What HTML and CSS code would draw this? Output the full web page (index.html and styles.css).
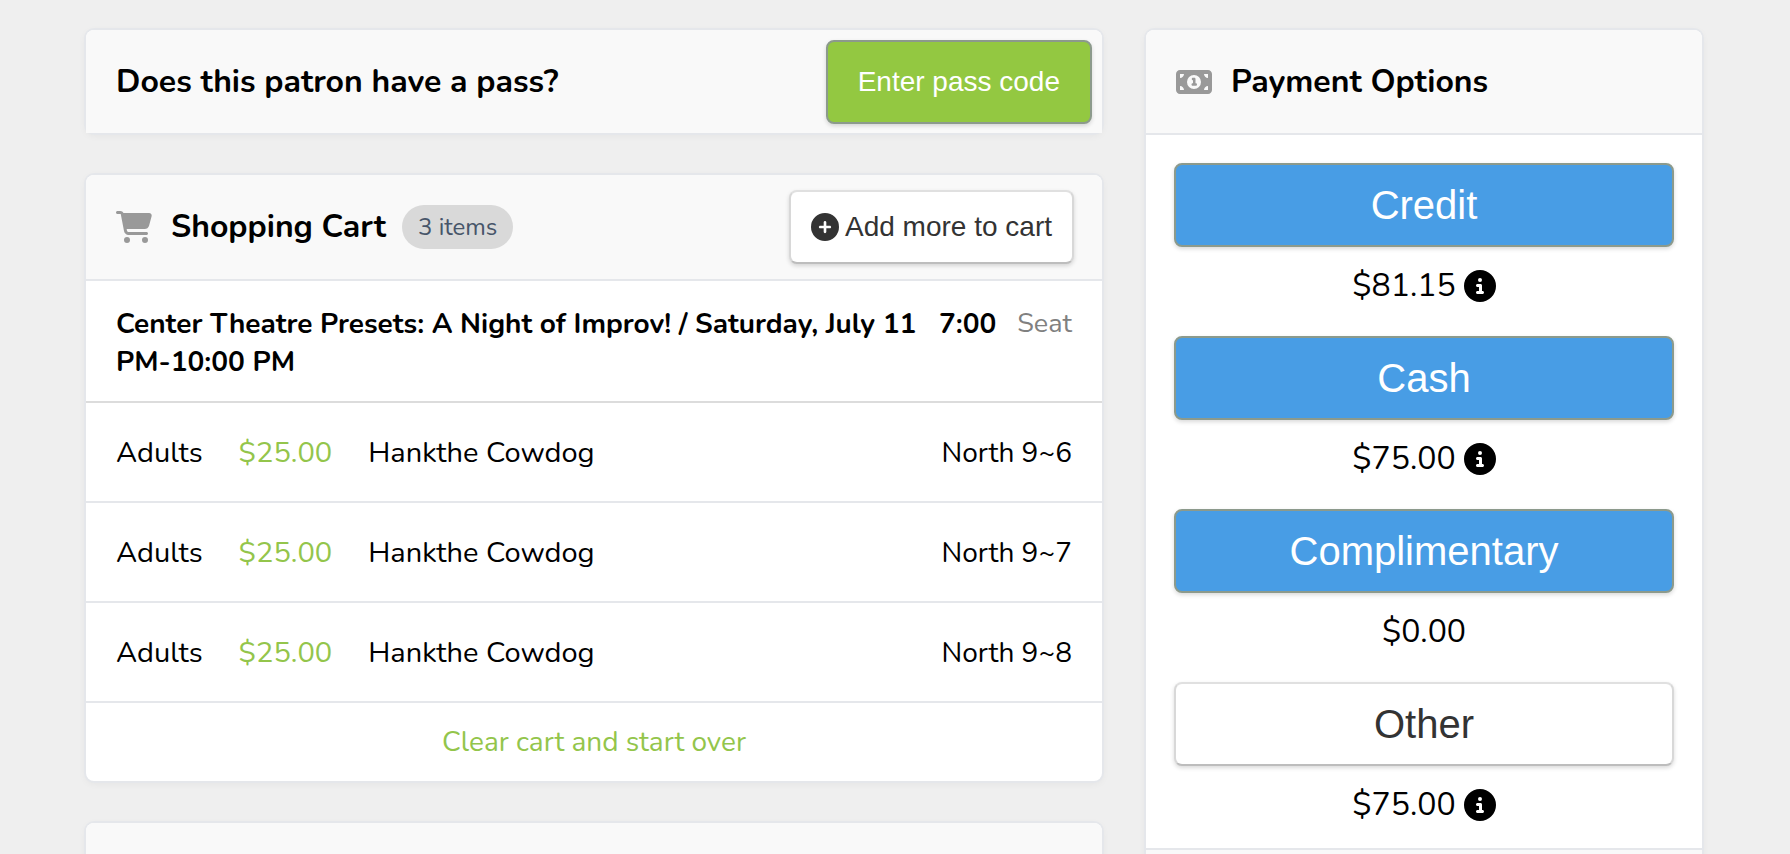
FILE: index.html
```html
<!DOCTYPE html>
<html lang="en">
<head>
  <meta charset="UTF-8" />
  <meta name="viewport" content="width=device-width, initial-scale=1.0"/>
  <title>Checkout</title>
  <link rel="stylesheet" href="styles.css">
</head>
<body>
  <div class="page">
    <main class="column">
      <section class="card">
        <div class="card-header pass-header">
          <h2>Does this patron have a pass?</h2>
          <button type="button" class="btn btn-green">Enter pass code</button>
        </div>
      </section>

      <section class="card">
        <div class="card-header cart-header">
          <svg class="header-icon" viewBox="0 0 576 512" aria-hidden="true"><path d="M0 24C0 10.7 10.7 0 24 0H69.5c22 0 41.5 12.8 50.6 32h411c26.3 0 45.5 25 38.6 50.4l-41 152.3c-8.5 31.4-37 53.3-69.5 53.3H170.7l5.4 28.5c2.2 11.3 12.1 19.5 23.6 19.5H488c13.3 0 24 10.7 24 24s-10.7 24-24 24H199.7c-34.6 0-64.3-24.6-70.7-58.5L77.4 54.5c-.7-3.8-4-6.5-7.9-6.5H24C10.7 48 0 37.3 0 24zM128 464a48 48 0 1 1 96 0 48 48 0 1 1 -96 0zm336-48a48 48 0 1 1 0 96 48 48 0 1 1 0-96z"/></svg>
          <h2>Shopping Cart</h2>
          <span class="badge">3 items</span>
          <button type="button" class="btn btn-white btn-add">
            <svg class="plus-icon" viewBox="0 0 512 512" aria-hidden="true"><path d="M256 512A256 256 0 1 0 256 0a256 256 0 1 0 0 512zM232 344V280H168c-13.3 0-24-10.7-24-24s10.7-24 24-24h64V168c0-13.3 10.7-24 24-24s24 10.7 24 24v64h64c13.3 0 24 10.7 24 24s-10.7 24-24 24H280v64c0 13.3-10.7 24-24 24s-24-10.7-24-24z"/></svg>
            Add more to cart
          </button>
        </div>
        <div class="event">
          <h3>Center Theatre Presets: A Night of Improv! / Saturday, July 11 &nbsp; 7:00 PM-10:00 PM</h3>
          <span class="seat-label">Seat</span>
        </div>
        <ul class="tickets">
          <li>
            <span>Adults</span>
            <span class="price">$25.00</span>
            <span>Hankthe Cowdog</span>
            <span class="seat">North 9~6</span>
          </li>
          <li>
            <span>Adults</span>
            <span class="price">$25.00</span>
            <span>Hankthe Cowdog</span>
            <span class="seat">North 9~7</span>
          </li>
          <li>
            <span>Adults</span>
            <span class="price">$25.00</span>
            <span>Hankthe Cowdog</span>
            <span class="seat">North 9~8</span>
          </li>
        </ul>
        <div class="clear-cart">
          <a href="#">Clear cart and start over</a>
        </div>
      </section>

      <section class="card">
        <div class="card-header"></div>
      </section>
    </main>

    <aside class="card">
      <div class="card-header">
        <svg class="header-icon" viewBox="0 0 576 512" aria-hidden="true"><path d="M64 64C28.7 64 0 92.7 0 128V384c0 35.3 28.7 64 64 64H512c35.3 0 64-28.7 64-64V128c0-35.3-28.7-64-64-64H64zm64 320H64V320c35.3 0 64 28.7 64 64zM64 192V128h64c0 35.3-28.7 64-64 64zM448 384c0-35.3 28.7-64 64-64v64H448zm64-192c-35.3 0-64-28.7-64-64h64v64zM176 256a112 112 0 1 1 224 0 112 112 0 1 1 -224 0zm76-48c0 11 9 20 20 20v48h-4c-11 0-20 9-20 20s9 20 20 20h24 24c11 0 20-9 20-20s-9-20-20-20h-4V208c0-11-9-20-20-20H272c-11 0-20 9-20 20z"/></svg>
        <h2>Payment Options</h2>
      </div>
      <div class="payments">
        <div class="payment">
          <button type="button" class="btn btn-blue">Credit</button>
          <p>$81.15 <svg class="info-icon" viewBox="0 0 512 512" aria-hidden="true"><path d="M256 512A256 256 0 1 0 256 0a256 256 0 1 0 0 512zM216 336h24V272H216c-13.3 0-24-10.7-24-24s10.7-24 24-24h48c13.3 0 24 10.7 24 24v88h8c13.3 0 24 10.7 24 24s-10.7 24-24 24H216c-13.3 0-24-10.7-24-24s10.7-24 24-24zm40-208a32 32 0 1 1 0 64 32 32 0 1 1 0-64z"/></svg></p>
        </div>
        <div class="payment">
          <button type="button" class="btn btn-blue">Cash</button>
          <p>$75.00 <svg class="info-icon" viewBox="0 0 512 512" aria-hidden="true"><path d="M256 512A256 256 0 1 0 256 0a256 256 0 1 0 0 512zM216 336h24V272H216c-13.3 0-24-10.7-24-24s10.7-24 24-24h48c13.3 0 24 10.7 24 24v88h8c13.3 0 24 10.7 24 24s-10.7 24-24 24H216c-13.3 0-24-10.7-24-24s10.7-24 24-24zm40-208a32 32 0 1 1 0 64 32 32 0 1 1 0-64z"/></svg></p>
        </div>
        <div class="payment">
          <button type="button" class="btn btn-blue">Complimentary</button>
          <p>$0.00</p>
        </div>
        <div class="payment">
          <button type="button" class="btn btn-white">Other</button>
          <p>$75.00 <svg class="info-icon" viewBox="0 0 512 512" aria-hidden="true"><path d="M256 512A256 256 0 1 0 256 0a256 256 0 1 0 0 512zM216 336h24V272H216c-13.3 0-24-10.7-24-24s10.7-24 24-24h48c13.3 0 24 10.7 24 24v88h8c13.3 0 24 10.7 24 24s-10.7 24-24 24H216c-13.3 0-24-10.7-24-24s10.7-24 24-24zm40-208a32 32 0 1 1 0 64 32 32 0 1 1 0-64z"/></svg></p>
        </div>
      </div>
      <div class="card-footer"></div>
    </aside>
  </div>
</body>
</html>
```
FILE: styles.css
```css
* {
  box-sizing: border-box;
}
body {
  font-family: Nunito, Lato, sans-serif;
  font-size: 29px;
  line-height: 38px;
  background-color: #efefef;
  color: #000;
  margin: 0;
}
h2, h3, p, ul {
  margin: 0;
  padding: 0;
}
h2 {
  font-size: 32px;
  line-height: 44px;
}
.page {
  display: grid;
  grid-template-columns: minmax(0, 1016fr) minmax(0, 556fr);
  align-items: start;
  gap: 44px;
  padding: 30px 88px 0 86px;
}
.column {
  display: grid;
  gap: 42px;
}
.card {
  background: white;
  border-radius: 8px;
  box-shadow: 0 0 0 2px #e5e7eb, 0 2px 8px rgba(0,0,0,0.06);
}
.card-header {
  display: flex;
  align-items: center;
  min-height: 105px;
  padding: 0 30px;
  background: #f9f9f9;
  border-bottom: 2px solid #e5e7eb;
  border-radius: 8px 8px 0 0;
}
.pass-header {
  justify-content: space-between;
  min-height: 103px;
  padding-right: 10px;
  border-bottom: none;
}
.cart-header {
  min-height: 106px;
  padding-right: 28px;
}
.header-icon {
  width: 36px;
  height: 32px;
  margin-right: 19px;
  fill: #999;
}
.badge {
  margin-left: 16px;
  padding: 0 16px;
  border-radius: 22px;
  background: #d9d9d9;
  color: #475569;
  font-size: 24px;
  line-height: 44px;
}
.btn {
  font-family: "Liberation Sans", Arial, sans-serif;
  font-size: 28px;
  line-height: 32px;
  border: 2px solid #8c9a8c;
  border-radius: 8px;
  padding: 24px 30px;
  color: white;
  box-shadow: 0 2px 4px rgba(0,0,0,0.15);
  cursor: pointer;
}
.btn-green {
  background: #93c841;
}
.btn-blue {
  background: #489de5;
}
.btn-white {
  background: white;
  color: #333;
  border-color: #e0e0e0 #d8d8d8 #bdbdbd;
}
.btn-add {
  display: flex;
  align-items: center;
  gap: 6px;
  margin-left: auto;
  padding: 19px 20px;
}
.plus-icon {
  width: 28px;
  height: 28px;
  fill: #333;
}
.event {
  display: flex;
  align-items: flex-start;
  gap: 12px;
  padding: 24px 30px 20px;
  border-bottom: 2px solid #dcdcdc;
}
.event h3 {
  flex: 1;
  font-size: 28px;
  line-height: 38px;
}
.seat-label {
  color: #808080;
  font-size: 27px;
}
.tickets {
  list-style: none;
}
.tickets li {
  display: flex;
  align-items: center;
  gap: 36px;
  height: 100px;
  padding: 2px 30px 0;
  border-bottom: 2px solid #e5e7eb;
}
.price {
  color: #93c54b;
}
.seat {
  margin-left: auto;
  font-size: 28px;
}
.clear-cart {
  padding: 20px 30px;
  text-align: center;
  font-size: 28px;
}
.clear-cart a {
  color: #93c54b;
  text-decoration: none;
}
.payments {
  display: grid;
  gap: 28px;
  padding: 28px 28px 21px;
}
.payment .btn {
  width: 100%;
  font-size: 40px;
  line-height: 44px;
  padding: 18px;
}
.payment p {
  display: flex;
  align-items: center;
  justify-content: center;
  gap: 8px;
  margin-top: 17px;
  font-size: 32px;
  line-height: 44px;
}
.info-icon {
  width: 32px;
  height: 32px;
}
.card-footer {
  min-height: 60px;
  background: #f9f9f9;
  border-top: 2px solid #e5e7eb;
  border-radius: 0 0 8px 8px;
}
```
